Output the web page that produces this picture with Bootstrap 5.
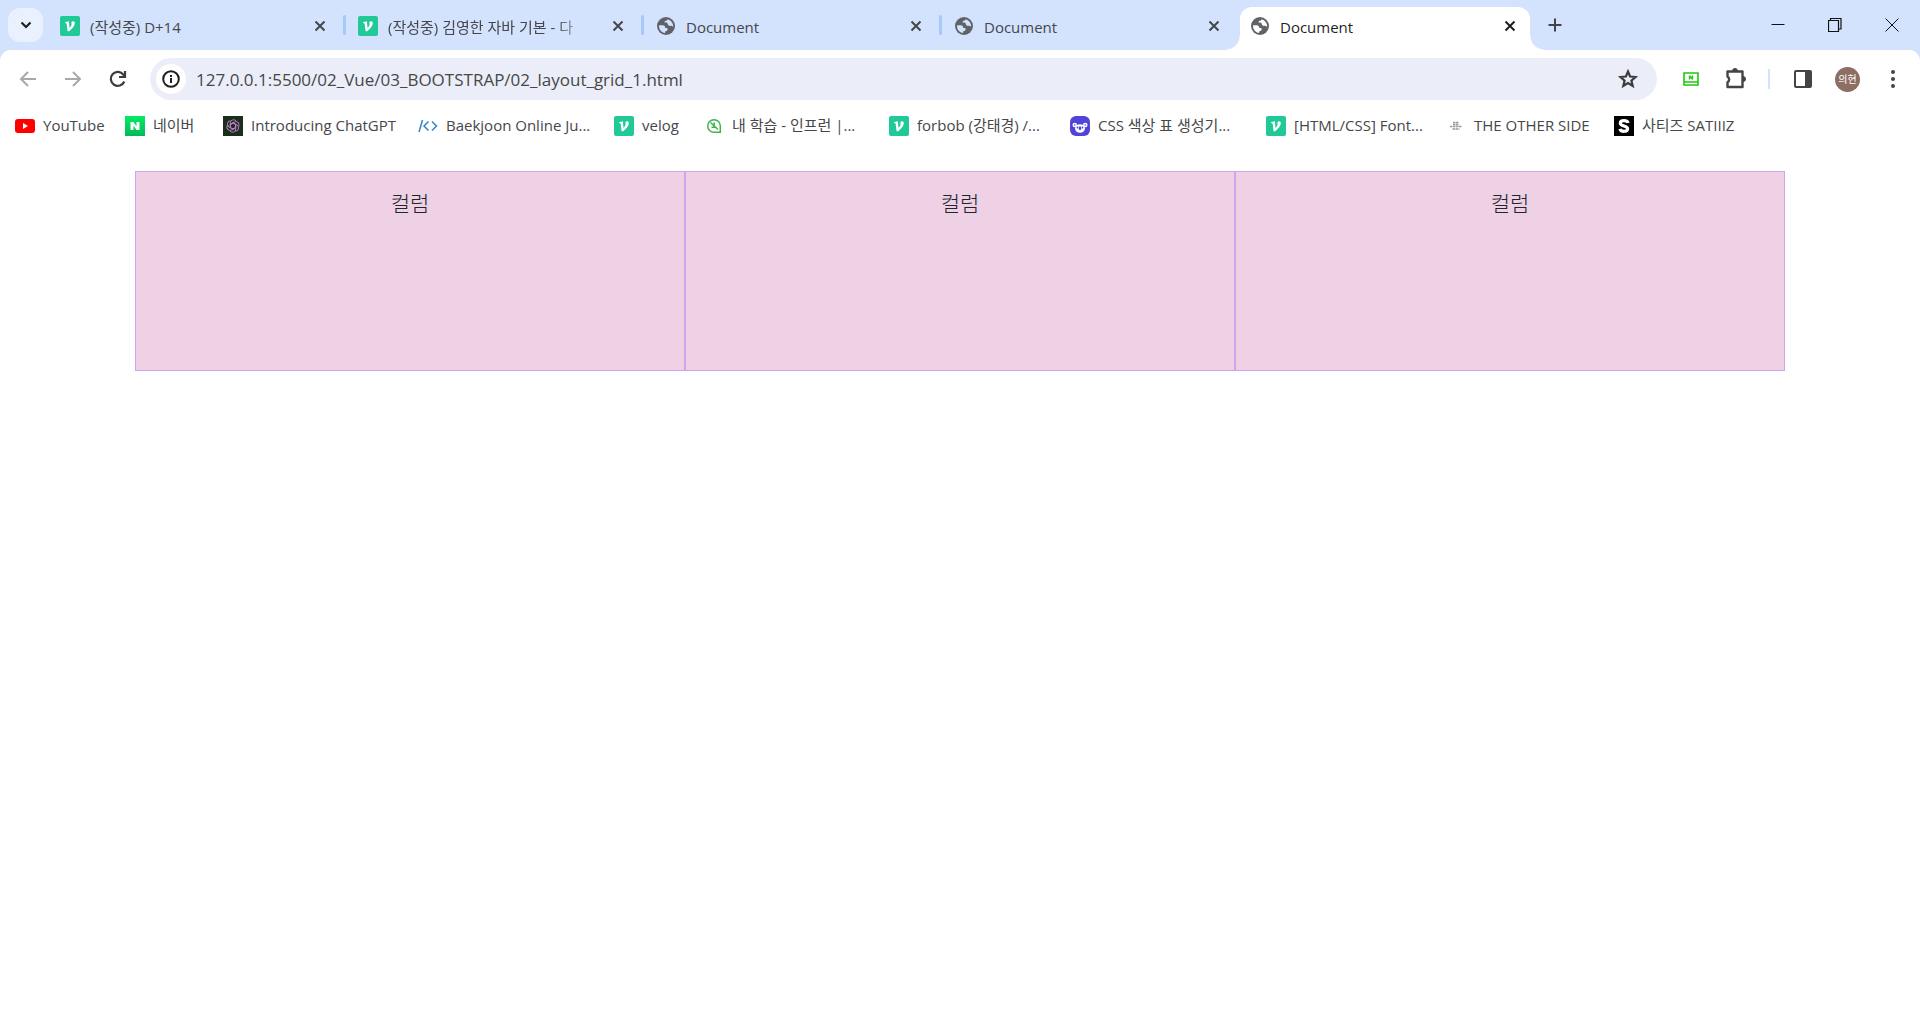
<!DOCTYPE html>
<html lang="ko">
<head>
<meta charset="utf-8">
<meta name="viewport" content="width=device-width, initial-scale=1">
<title>Document</title>
<link rel="stylesheet" href="https://cdn.jsdelivr.net/npm/bootstrap@5.3.0/dist/css/bootstrap.min.css">
<script src="https://cdn.jsdelivr.net/npm/bootstrap@5.3.0/dist/js/bootstrap.bundle.min.js"></script>
<style>
body{font-family:"Open Sans","Noto Sans CJK KR",sans-serif;font-size:15px;line-height:20px;color:#45474a;background:#fff}
svg{display:block;flex:none}
button{border:0;background:none;padding:0;color:inherit;display:flex;align-items:center;justify-content:center;flex:none}
a{color:inherit;text-decoration:none}
.tabstrip{background:#d3e2fd;height:50px;padding-left:8px}
.tabsearch{width:35px;height:34px;border-radius:12px;background:#eaf1fe;color:#1f1f1f;margin:8px 5px 8px 0}
.tab{--tab-bg:#d3e2fd;width:298px;height:43px;margin-top:7px;padding:0 16px 6px 12px;position:relative}
.tab:not(.active)+.tab:not(.active)::before{content:"";position:absolute;left:-3px;top:8px;width:3px;height:20px;border-radius:2px;background:#a8c7fa}
.tab .caption{flex:1;min-width:0;margin:3px 12px 0 10px;overflow:hidden;white-space:nowrap}
.tab .fading{-webkit-mask-image:linear-gradient(90deg,#000 80%,transparent 98%);mask-image:linear-gradient(90deg,#000 80%,transparent 98%)}
.tab.active{--tab-bg:#fff;width:290px;background:#fff;border-radius:12px 12px 0 0;color:#1f1f1f;padding:0 10px 6px 10px}
.tab.active::before,.tab.active::after{content:"";position:absolute;bottom:0;width:14px;height:14px}
.tab.active::before{left:-14px;background:radial-gradient(circle at 0 0,transparent 13px,#fff 14px)}
.tab.active::after{right:-14px;background:radial-gradient(circle at 100% 0,transparent 13px,#fff 14px)}
.tab button{width:20px;height:20px}
.newtab{width:26px;height:50px;margin-left:12px;padding-bottom:1px}
.winbtn{width:57px;height:50px;color:#111;padding-bottom:1px}
.chrome{background:#d3e2fd}
.toolbar{background:#fff;border-radius:11px 11px 0 0;padding:8px 5px 6px 5px;height:56px}
.navbtn{width:45px;height:42px}
.omnibox{height:42px;border-radius:21px;background:#ebeef8;margin:0 11px 0 10px;padding:0 17px 0 6px;flex:1;min-width:0}
.siteinfo{width:30px;height:30px;border-radius:50%;background:#fff;color:#1f1f1f}
.address{flex:1;min-width:0;border:0;background:none;outline:0;padding:2px 0 0;margin-left:10px;font-size:17px;line-height:24px;color:#474747}
.tool{width:45px;height:42px}
.toolsep{width:2px;height:20px;background:#d3e2fd;margin:0 10px}
.avatar{width:25px;height:25px;border-radius:50%;background:#8d6e63;color:#fff;font-size:10px;margin:0 10px}
.bookmarks{display:grid;grid-template-columns:110px 98px 195px 196px 90px 185px 181px 196px 180px 168px auto;padding:10px 15px;height:40px;white-space:nowrap}
.bookmarks a{display:flex;align-items:center;gap:8px;height:20px;line-height:18px}
.bookmarks a span{padding-bottom:2px}
.stage{max-width:1650px;margin:25px auto 0}
.cell{height:200px;padding:16px 15px;background:#efd1e5;border:1px solid #cda5ec;font-size:21px;font-weight:300;line-height:30px;color:#212529;text-align:center}
</style>
</head>
<body>
<svg width="0" height="0" class="position-absolute" aria-hidden="true">
<symbol id="velog" viewBox="0 0 20 20"><rect width="20" height="20" rx="2" fill="#20c997"/><path d="M5 6.300l3.800-1 .8 6.700c1.500-1.700 2.300-3.300 1.900-4.400-.3-.9-.1-2.300 1.500-2.300 1.300 0 2 .9 1.800 2.300-.4 2.600-2.600 5.200-5.600 7.600H7.600L6.600 7.400 5.100 7z" fill="#fff"/></symbol>
<symbol id="globe" viewBox="0 0 20 20"><circle cx="10" cy="10" r="9" fill="#5f6368"/><path d="M11.500 3.200c-.2 1.300-.8 1.500-2 1.600-.8.100-.9 1-1 1.800 1 .1 2.300-.2 3 .6.700.8.300 1.800 1.100 2.200 1.200.6 2.300-.1 3.300.6.400.3.700.7 1.200.6.200-3.500-2.200-6.700-5.600-7.400zM3.100 9.200c-.5 4.200 2.500 7.400 6 7.800-.1-1 .1-1.800 1-2 1.100-.2 1.700-.9 1.600-1.900-.1-.9-.9-1-1.800-1-1-.1-.6-1.400-1.300-2.200C7.500 8.800 5 9.300 3.100 9.200z" fill="var(--tab-bg)"/></symbol>
<symbol id="cross" viewBox="0 0 20 20"><path d="M5.500 5.500l9 9m0-9l-9 9" stroke="currentColor" stroke-width="2" fill="none"/></symbol>
</svg>
<header class="chrome">
<div class="tabstrip d-flex align-items-start">
<button class="tabsearch" aria-label="탭 검색"><svg width="14" height="14" viewBox="0 0 14 14"><path d="M2.500 4.500L7 9l4.500-4.500" fill="none" stroke="currentColor" stroke-width="2.200"/></svg></button>
<div class="tab d-flex align-items-center"><svg width="20" height="20"><use href="#velog"/></svg><span class="caption">(작성중) D+14</span><button aria-label="닫기"><svg width="20" height="20"><use href="#cross"/></svg></button></div>
<div class="tab d-flex align-items-center"><svg width="20" height="20"><use href="#velog"/></svg><span class="caption fading">(작성중) 김영한 자바 기본 - 다</span><button aria-label="닫기"><svg width="20" height="20"><use href="#cross"/></svg></button></div>
<div class="tab d-flex align-items-center"><svg width="20" height="20"><use href="#globe"/></svg><span class="caption">Document</span><button aria-label="닫기"><svg width="20" height="20"><use href="#cross"/></svg></button></div>
<div class="tab d-flex align-items-center"><svg width="20" height="20"><use href="#globe"/></svg><span class="caption">Document</span><button aria-label="닫기"><svg width="20" height="20"><use href="#cross"/></svg></button></div>
<div class="tab active d-flex align-items-center"><svg width="20" height="20"><use href="#globe"/></svg><span class="caption">Document</span><button aria-label="닫기"><svg width="20" height="20"><use href="#cross"/></svg></button></div>
<button class="newtab" aria-label="새 탭"><svg width="14" height="14" viewBox="0 0 14 14"><path d="M7 .5v13M.5 7h13" stroke="#444" stroke-width="2"/></svg></button>
<div class="d-flex ms-auto">
<button class="winbtn" aria-label="최소화"><svg width="14" height="14" viewBox="0 0 14 14"><path d="M.5 6.500h13" stroke="currentColor"/></svg></button>
<button class="winbtn" aria-label="이전 크기로"><svg width="14" height="14" viewBox="0 0 14 14"><path d="M.5 2.500h10v11H.5zM2.500 2V.5h10.500v10.500H11" fill="none" stroke="currentColor" stroke-width="1.200"/></svg></button>
<button class="winbtn" aria-label="창 닫기"><svg width="14" height="14" viewBox="0 0 14 14"><path d="M.5.5l13 13m0-13l-13 13" stroke="currentColor"/></svg></button>
</div>
</div>
<div class="toolbar d-flex align-items-center">
<button class="navbtn" aria-label="뒤로"><svg width="18" height="18" viewBox="0 0 18 18"><path d="M17 9H2.500M9 2L2 9l7 7" fill="none" stroke="#a9a9a9" stroke-width="2"/></svg></button>
<button class="navbtn" aria-label="앞으로"><svg width="18" height="18" viewBox="0 0 18 18"><path d="M1 9h14.500M9 2l7 7-7 7" fill="none" stroke="#a9a9a9" stroke-width="2"/></svg></button>
<button class="navbtn" aria-label="새로고침"><svg width="18" height="18" viewBox="0 0 18 18"><path d="M15.300 11.500A7 7 0 1 1 14.500 4.800L15.800 6.500M16 1v6h-6" fill="none" stroke="#3c3c3c" stroke-width="2.200"/></svg></button>
<div class="omnibox d-flex align-items-center">
<button class="siteinfo" aria-label="사이트 정보"><svg width="18" height="18" viewBox="0 0 18 18"><circle cx="9" cy="9" r="7.800" fill="none" stroke="currentColor" stroke-width="2"/><path d="M9 8v5M9 5v2" stroke="currentColor" stroke-width="2"/></svg></button>
<input class="address" aria-label="주소창" value="127.0.0.1:5500/02_Vue/03_BOOTSTRAP/02_layout_grid_1.html">
<button aria-label="북마크"><svg width="24" height="24" viewBox="0 0 24 24"><path d="M12 4.500l2.100 5 5.400.5-4.100 3.600 1.300 5.400-4.700-2.900L7.300 19l1.300-5.400L4.500 10l5.400-.5z" fill="none" stroke="#3c3c3c" stroke-width="2.200"/></svg></button>
</div>
<button class="tool" aria-label="네이버 확장 프로그램"><svg width="16" height="14" viewBox="0 0 16 14"><path d="M1 1h14v12H1zM1 10h14" fill="none" stroke="#1fc80e" stroke-width="1.600"/><path d="M5.800 7.500V3.500h1.500l1.400 1.700V3.500h1.500v4H8.700L7.300 5.800v1.700z" fill="#1fc80e"/></svg></button>
<button class="tool" aria-label="확장 프로그램"><svg width="24" height="24" viewBox="0 0 24 24"><path d="M3.500 4.500h15v15.500h-15v-4.800a3.200 3.200 0 0 0 0-5.600z" fill="none" stroke="#444" stroke-width="2.400" stroke-linejoin="round"/><path d="M8.500 4a2.500 2.500 0 0 1 5 0zM19 9.500a2.500 2.500 0 0 1 0 5z" fill="#444" stroke="#444"/></svg></button>
<div class="toolsep"></div>
<button class="tool" aria-label="측면 패널"><svg width="18" height="18" viewBox="0 0 18 18"><rect x="1" y="1" width="16" height="16" rx="1" fill="none" stroke="#444" stroke-width="2"/><path d="M11 1h6v16h-6z" fill="#444"/></svg></button>
<button class="avatar" aria-label="프로필">의현</button>
<button class="tool" aria-label="메뉴"><svg width="4" height="18" viewBox="0 0 4 18" fill="#444"><circle cx="2" cy="2" r="2"/><circle cx="2" cy="9" r="2"/><circle cx="2" cy="16" r="2"/></svg></button>
</div>
</header>
<nav class="bookmarks" aria-label="북마크바">
<a href="#"><svg width="20" height="20" viewBox="0 0 20 20"><rect y="3" width="20" height="14" rx="3" fill="#f00"/><path d="M8 7l5 3-5 3z" fill="#fff"/></svg><span>YouTube</span></a>
<a href="#"><svg width="20" height="20" viewBox="0 0 20 20"><linearGradient id="leafy" x2="0" y2="1"><stop stop-color="#03ec64"/><stop offset="1" stop-color="#04b85a"/></linearGradient><rect width="20" height="20" fill="url(#leafy)"/><path d="M5.500 14V6h3l3 4.300V6h3v8h-3l-3-4.300V14z" fill="#fff"/></svg><span>네이버</span></a>
<a href="#"><svg width="20" height="20" viewBox="0 0 20 20"><rect width="20" height="20" fill="#1a2e1c"/><g fill="none" stroke="#c77fd6" stroke-width=".9"><path id="petal" d="M10 7L12.800 8.600V13A3.400 3.400 0 0 1 6.600 14.800"/><use href="#petal" transform="rotate(60 10 10)"/><use href="#petal" transform="rotate(120 10 10)"/><use href="#petal" transform="rotate(180 10 10)"/><use href="#petal" transform="rotate(240 10 10)"/><use href="#petal" transform="rotate(300 10 10)"/></g></svg><span>Introducing ChatGPT</span></a>
<a href="#"><svg width="20" height="20" viewBox="0 0 20 20"><path d="M4.500 4L1 16M10.500 5.500L6 10l4.500 4.500M14 5.500l4.500 4.500-4.500 4.500" fill="none" stroke="#2f86cc" stroke-width="1.500"/></svg><span>Baekjoon Online Ju...</span></a>
<a href="#"><svg width="20" height="20"><use href="#velog"/></svg><span>velog</span></a>
<a href="#"><svg width="20" height="20" viewBox="0 0 20 20"><path d="M10 3.700a6.300 6.300 0 1 0 0 12.600h6.300V10A6.300 6.300 0 0 0 10 3.700zM6.500 6.500l7.500 7M10.200 9.700V6.500M11.500 11.300H7.500" fill="none" stroke="#3fb34f" stroke-width="1.500"/></svg><span>내 학습 - 인프런 |...</span></a>
<a href="#"><svg width="20" height="20"><use href="#velog"/></svg><span>forbob (강태경) /...</span></a>
<a href="#"><svg width="20" height="20" viewBox="0 0 20 20"><rect width="20" height="20" rx="6" fill="#5145d8"/><circle cx="4.800" cy="9" r="2.300" fill="#fff"/><circle cx="15.200" cy="9" r="2.300" fill="#fff"/><circle cx="4.800" cy="9" r=".8" fill="#5145d8"/><circle cx="15.200" cy="9" r=".8" fill="#5145d8"/><ellipse cx="10" cy="12.500" rx="5" ry="4.200" fill="#fff"/><circle cx="7.500" cy="11.500" r=".9" fill="#5145d8"/><circle cx="12.500" cy="11.500" r=".9" fill="#5145d8"/><ellipse cx="10" cy="12.200" rx="1.200" ry="2" fill="#5145d8"/></svg><span>CSS 색상 표 생성기...</span></a>
<a href="#"><svg width="20" height="20"><use href="#velog"/></svg><span>[HTML/CSS] Font...</span></a>
<a href="#"><svg width="20" height="20" viewBox="0 0 20 20"><path d="M7 6.500h6M7 8.500h6M4 10.500h12M6.500 13h7" stroke="#999" stroke-width="1.400" stroke-dasharray="2.500 .5"/></svg><span>THE OTHER SIDE</span></a>
<a href="#"><svg width="20" height="20" viewBox="0 0 20 20"><rect width="20" height="20" fill="#000"/><path d="M14 7C13.500 4 6.300 3.800 6.300 7.200c0 3.300 7.300 2.200 7.300 5.500 0 3.400-7 3.400-7.600.2" fill="none" stroke="#fff" stroke-width="3.200"/></svg><span>사티즈 SATIIIZ</span></a>
</nav>
<main class="stage">
<div class="row g-0">
<div class="col"><div class="cell">컬럼</div></div>
<div class="col"><div class="cell">컬럼</div></div>
<div class="col"><div class="cell">컬럼</div></div>
</div>
</main>
</body>
</html>
